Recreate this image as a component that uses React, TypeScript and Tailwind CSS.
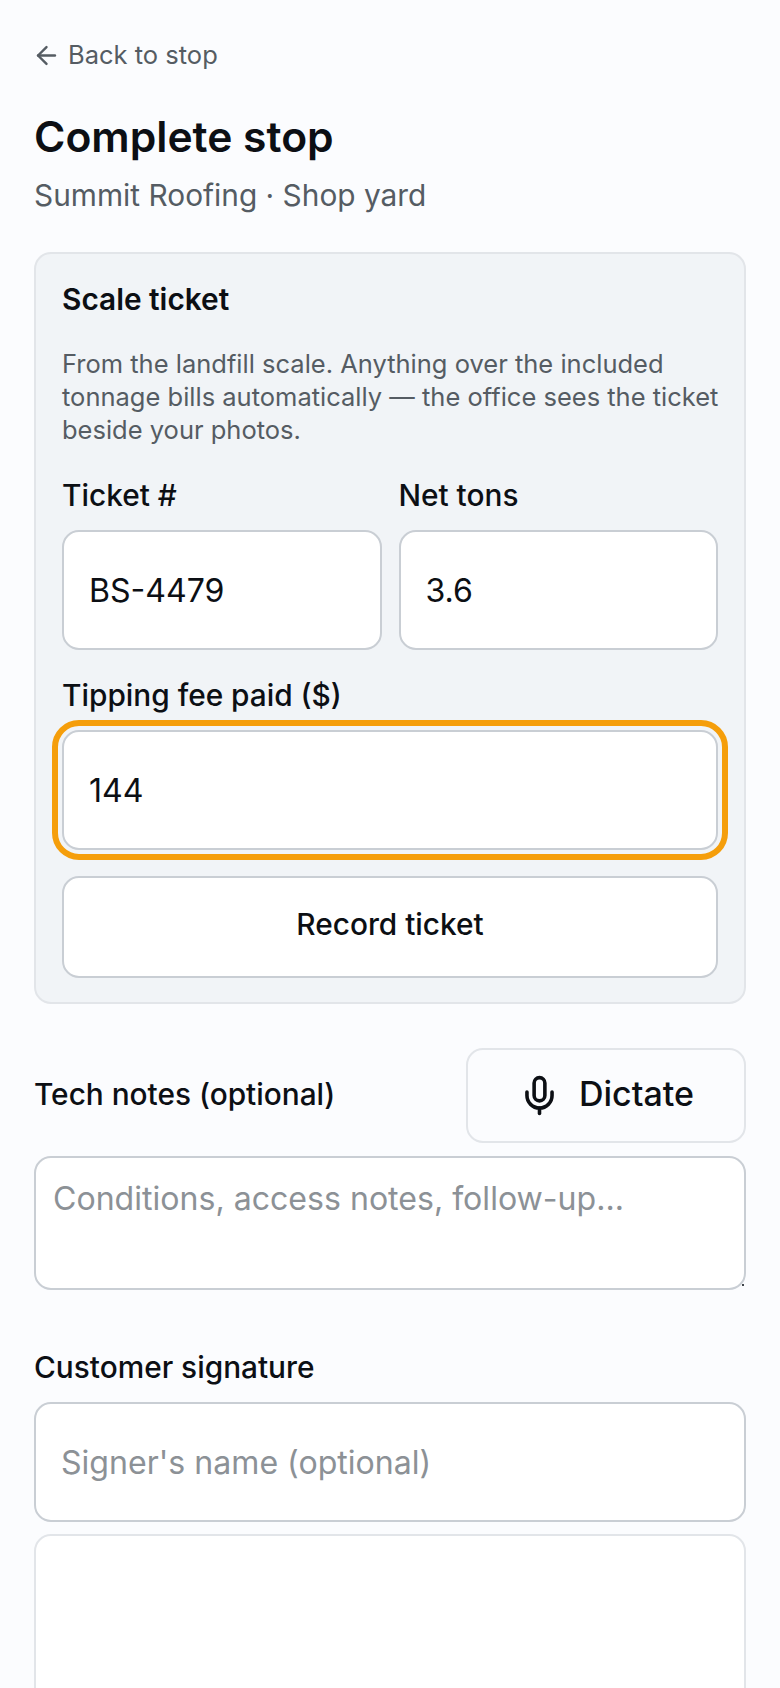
import { ArrowLeft, Mic } from 'lucide-react';

const inputClass =
  'block w-full h-[120px] px-[25px] rounded-[17px] border-2 border-[#c9ced4] bg-white text-[32.1px] text-[#0c0f14] placeholder:text-[#8c9196] outline-none';

const labelClass = 'mb-[15px] block text-[29.8px] leading-[40px] font-medium';

export default function App() {
  return (
    <div className="h-[1688px] overflow-hidden bg-[#fbfcfe] px-[34px] pt-[37px] font-[Inter,sans-serif] text-[#0c0f14]">
      <a className="flex h-[36px] items-center gap-[7px] text-[25.5px] text-[#555c63]">
        <ArrowLeft className="h-[29px] w-[29px] -ml-[2px] shrink-0" />
        Back to stop
      </a>
      <h1 className="mt-[34px] text-[42.6px] leading-[60px] font-semibold">Complete stop</h1>
      <p className="mt-[7px] text-[29.85px] leading-[43.33px] text-[#555c63]">Summit Roofing · Shop yard</p>

      {/* Scale ticket */}
      <section className="mt-[35px] rounded-[17px] border-2 border-[#e2e5e9] bg-[#f1f4f7] px-[26px] pt-[24px] pb-[24px]">
        <h2 className="text-[29.8px] leading-[43px] font-semibold">Scale ticket</h2>
        <p className="mt-[26px] -mr-[6px] text-[25.5px] leading-[33px] text-[#555c63]">
          From the landfill scale. Anything over the included tonnage bills automatically — the office sees the ticket
          beside your photos.
        </p>
        <div className="mt-[29px] grid grid-cols-2 gap-x-[17px]">
          <label className="block">
            <span className={labelClass}>Ticket #</span>
            <input className={inputClass} defaultValue="BS-4479" />
          </label>
          <label className="block">
            <span className={labelClass}>Net tons</span>
            <input className={inputClass} defaultValue="3.6" />
          </label>
        </div>
        <label className="mt-[25px] block">
          <span className={labelClass}>Tipping fee paid ($)</span>
          <input
            className="block h-[120px] w-full rounded-[17px] border-2 border-[#c9ced4] bg-white px-[25px] text-[32.1px] text-[#0c0f14] outline-[6px] outline-offset-[4px] outline-[#f59e0b]"
            defaultValue="144"
          />
        </label>
        <button className="mt-[26px] block h-[102px] w-full rounded-[17px] border-2 border-[#c9ced4] bg-white pb-[6px] text-[29.8px] font-medium">
          Record ticket
        </button>
      </section>

      {/* Tech notes */}
      <div className="mt-[44px] flex items-center justify-between">
        <span className="pb-[4px] text-[29.8px] leading-[40px] font-medium">Tech notes (optional)</span>
        <button className="flex h-[95px] w-[280px] items-center justify-center gap-[18px] rounded-[17px] border-2 border-[#e2e5e9] text-[34px] font-medium">
          <Mic className="h-[43px] w-[43px] shrink-0" />
          <span className="pb-[4px]">Dictate</span>
        </button>
      </div>
      <div className="relative mt-[13px]">
        <textarea
          className="block h-[134px] w-full resize-none rounded-[17px] border-2 border-[#c9ced4] bg-white px-[17px] py-[15px] text-[32.1px] leading-[52px] placeholder:text-[#8c9196] outline-none"
          placeholder="Conditions, access notes, follow-up..."
        />
        <span className="absolute right-[2px] bottom-[4px] h-[2px] w-[2px] bg-[#3f4449]" />
      </div>

      {/* Customer signature */}
      <p className="mt-[57px] text-[29.8px] leading-[40px] font-medium">Customer signature</p>
      <input
        className="mt-[15px] block h-[120px] w-full rounded-[17px] border-2 border-[#c9ced4] bg-white px-[25px] text-[32.1px] placeholder:text-[#8c9196] outline-none"
        placeholder="Signer's name (optional)"
      />
      <div className="mt-[12px] h-[300px] rounded-[17px] border-2 border-[#e2e5e9] bg-white" />
    </div>
  );
}
